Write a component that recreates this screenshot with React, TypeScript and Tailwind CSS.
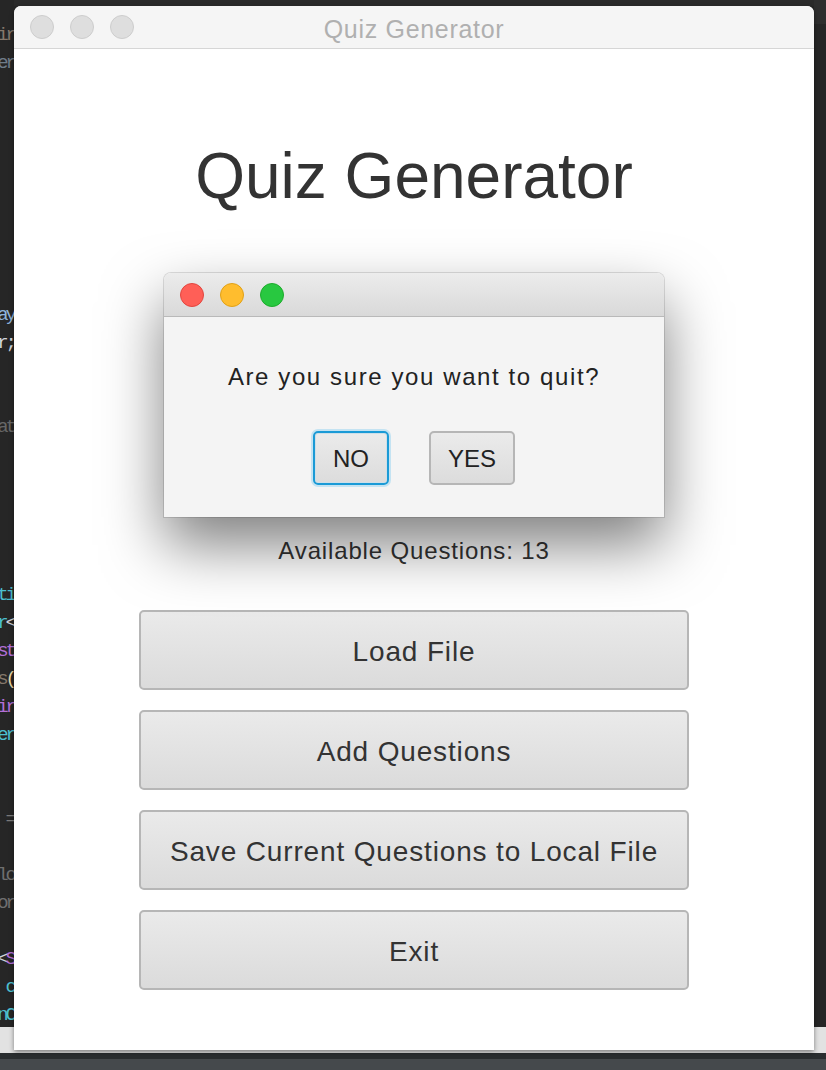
import React from "react";

type Seg = { t: string; c: string };

// fragments of the editor that peek out on the left of the window
const codeLines: Seg[][] = Array.from({ length: 36 }, () => []);
codeLines[0] = [{ t: "ir", c: "#85786c" }];
codeLines[1] = [{ t: "er", c: "#6f7c88" }];
codeLines[10] = [{ t: "ay", c: "#8fb4dc" }];
codeLines[11] = [{ t: "r;", c: "#d2d6de" }];
codeLines[14] = [{ t: "at", c: "#676767" }];
codeLines[20] = [{ t: "ti", c: "#4cbfcf" }];
codeLines[21] = [{ t: "r", c: "#4cbfcf" }, { t: "<", c: "#cfd3d9" }];
codeLines[22] = [{ t: "st", c: "#b26fd6" }];
codeLines[23] = [{ t: "s", c: "#85786c" }, { t: "(", c: "#e6d6a6" }];
codeLines[24] = [{ t: "ir", c: "#b26fd6" }];
codeLines[25] = [{ t: "er", c: "#4cbfcf" }];
codeLines[28] = [{ t: "=", c: "#7a7a7a" }];
codeLines[30] = [{ t: "lo", c: "#6f6f6f" }];
codeLines[31] = [{ t: "or", c: "#6f6f6f" }];
codeLines[33] = [{ t: "<", c: "#cfd3d9" }, { t: "S", c: "#b26fd6" }];
codeLines[34] = [{ t: "c", c: "#4cbfcf" }];
codeLines[35] = [{ t: "nC", c: "#4cbfcf" }];

const mainButtons = ["Load File", "Add Questions", "Save Current Questions to Local File", "Exit"];

function Light({ color, ring }: { color: string; ring: string }) {
  return (
    <span
      className="block w-[24px] h-[24px] rounded-full border"
      style={{ backgroundColor: color, borderColor: ring }}
    />
  );
}

export default function App() {
  return (
    <div className="w-[826px] h-[1070px] bg-[#262626] flex flex-col overflow-hidden font-['Liberation_Sans',Arial,sans-serif]">
      <div className="flex h-[1053px]">
        {/* left editor strip */}
        <div className="w-[14px] flex flex-col">
          <div className="flex-1 overflow-hidden pt-[21px] font-['Liberation_Mono',monospace] text-[19px] leading-[28px] tracking-[-3px]">
            {codeLines.map((line, i) => (
              <div key={i} className="h-[28px] flex justify-end whitespace-nowrap">
                {line.map((s, j) => (
                  <span key={j} style={{ color: s.c }}>
                    {s.t}
                  </span>
                ))}
              </div>
            ))}
          </div>
          <div className="h-[26px] bg-[#e2e2e2]" />
        </div>

        {/* window */}
        <div className="w-[800px] flex flex-col">
          <div className="h-[6px] bg-[#2a2a2a]" />
          <div className="h-[1044px] flex flex-col bg-white rounded-t-[7px] overflow-hidden shadow-[0_2px_5px_rgba(0,0,0,0.45)] relative z-10">
            <div className="h-[43px] shrink-0 bg-[#f5f5f5] border-b border-[#d6d6d6] grid grid-cols-[1fr_auto_1fr] items-center">
              <div className="flex gap-[16px] pl-[16px]">
                <Light color="#dedede" ring="#cdcdcd" />
                <Light color="#dedede" ring="#cdcdcd" />
                <Light color="#dedede" ring="#cdcdcd" />
              </div>
              <div className="pt-[4px] text-[25px] leading-[28px] text-[#b0b0b0] tracking-[0.7px]">Quiz Generator</div>
              <div />
            </div>

            <div className="flex-1 relative flex flex-col items-center">
              <h1 className="mt-[95px] text-[64px] leading-[64px] text-[#333333]">Quiz Generator</h1>

              <div className="mt-[329px] text-[24px] leading-[28px] text-[#333333] tracking-[0.85px]">
                Available Questions: 13
              </div>

              <div className="mt-[45px] flex flex-col gap-[20px]">
                {mainButtons.map((label) => (
                  <button
                    key={label}
                    className="w-[550px] h-[80px] pt-[4px] rounded-[5px] border-2 border-[#b6b6b6] bg-gradient-to-b from-[#eaeaea] to-[#dbdbdb] text-[28px] text-[#333333] tracking-[0.85px]"
                  >
                    {label}
                  </button>
                ))}
              </div>

              {/* confirm dialog */}
              <div className="absolute left-[150px] top-[224px] w-[500px] flex flex-col rounded-t-[7px] overflow-hidden shadow-[0_28px_60px_rgba(0,0,0,0.5),0_0_0_1px_rgba(0,0,0,0.12)]">
                <div className="h-[44px] bg-gradient-to-b from-[#ececec] to-[#d9d9d9] border-b border-[#b9b9b9] flex items-center gap-[16px] pl-[16px]">
                  <Light color="#ff5f57" ring="#e2463f" />
                  <Light color="#ffbd2e" ring="#e1a116" />
                  <Light color="#28c840" ring="#1dac2c" />
                </div>
                <div className="h-[200px] bg-[#f4f4f4] flex flex-col items-center">
                  <p className="mt-[46px] text-[24px] leading-[28px] text-[#222222] tracking-[1.6px]">
                    Are you sure you want to quit?
                  </p>
                  <div className="mt-[40px] flex gap-[40px]">
                    <button className="w-[76px] h-[54px] pt-[2px] rounded-[5px] border-2 border-[#1a9ad6] bg-gradient-to-b from-[#ebebeb] to-[#dcdcdc] shadow-[0_0_0_2px_#c4e3f2,inset_0_0_0_1px_#cddfe8] text-[24px] text-[#222222]">
                      NO
                    </button>
                    <button className="w-[86px] h-[54px] pt-[2px] rounded-[5px] border-2 border-[#b6b6b6] bg-gradient-to-b from-[#ebebeb] to-[#dcdcdc] text-[24px] text-[#222222]">
                      YES
                    </button>
                  </div>
                </div>
              </div>
            </div>
          </div>
          <div className="flex-1 bg-[#e2e2e2]" />
        </div>

        {/* right editor strip */}
        <div className="flex-1 flex flex-col">
          <div className="h-[24px] bg-[#2e2e2e]" />
          <div className="flex-1" />
          <div className="h-[26px] bg-[#e2e2e2]" />
        </div>
      </div>
      <div className="h-[6px] bg-[#2a2e30]" />
      <div className="flex-1 bg-[#45494c]" />
    </div>
  );
}
